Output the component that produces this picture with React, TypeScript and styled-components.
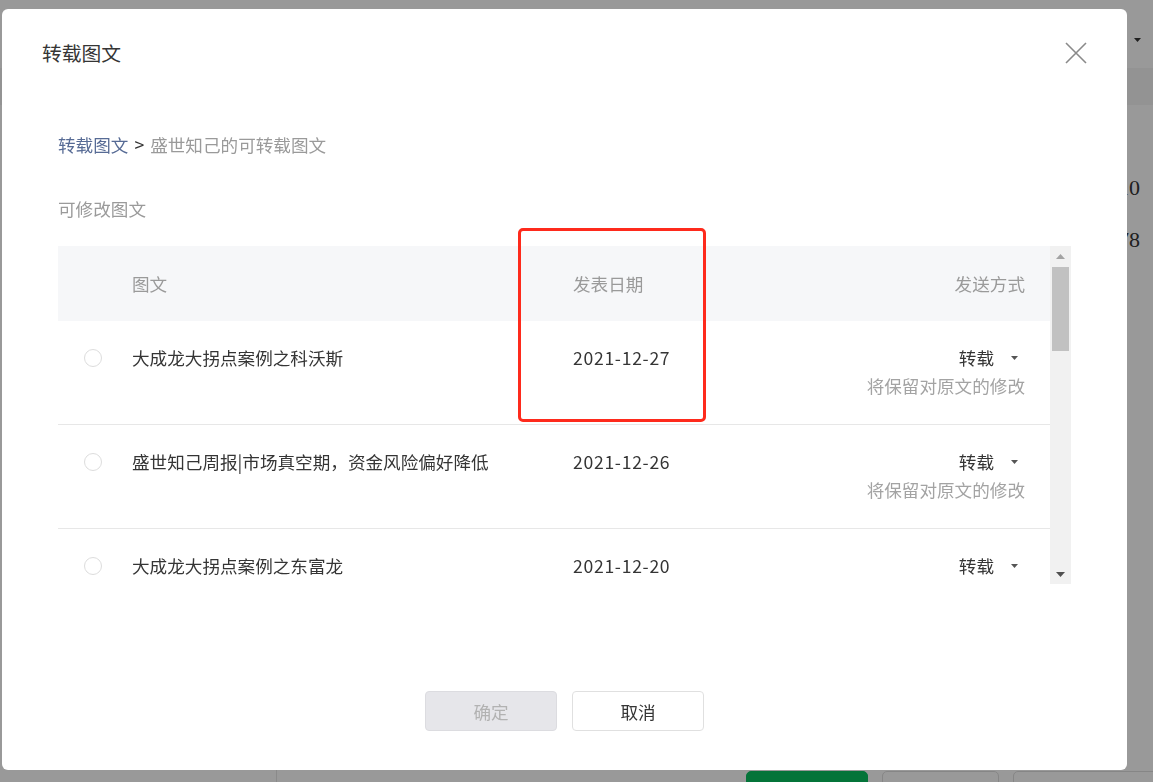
import React from "react";
import styled, { createGlobalStyle } from "styled-components";

const GlobalStyle = createGlobalStyle`
  html, body {
    margin: 0;
    padding: 0;
    height: 100%;
  }
  body {
    font-family: "Noto Sans CJK SC", "Noto Sans", sans-serif;
    color: #353535;
    overflow: hidden;
  }
  * {
    box-sizing: border-box;
  }
`;

/* ---------- page behind the dialog ---------- */

const Page = styled.div`
  display: flex;
  flex-direction: column;
  height: 100vh;
  background: #fff;
`;

const TopBar = styled.header`
  height: 68px;
  display: flex;
  align-items: center;
  justify-content: flex-end;
  gap: 8px;
  padding: 12px 12px 0 0;
  font-size: 17px;
  color: #353535;
`;

const NavBand = styled.div`
  height: 37px;
  background: #f5f5f5;
`;

const Workspace = styled.div`
  flex: 1;
  display: flex;
`;

const Sidebar = styled.aside`
  flex: none;
  width: 277px;
  border-right: 1px solid #e7e7e7;
`;

const Main = styled.main`
  flex: 1;
  min-width: 0;
  display: flex;
  flex-direction: column;
`;

const Stats = styled.div`
  flex: 1;
  display: flex;
  flex-direction: column;
  align-items: flex-end;
  gap: 24px;
  padding: 69px 13px 0 0;
  font-family: "Liberation Serif", serif;
  font-size: 22px;
  line-height: 28px;
  color: #353535;
`;

const PageFooter = styled.div`
  height: 11px;
  overflow: hidden;
  display: flex;
  gap: 14px;
  padding-left: 469px;
`;

const PageButton = styled.div<{ $primary?: boolean; $w: number }>`
  flex: none;
  width: ${(p) => p.$w}px;
  height: 40px;
  border-radius: 5px;
  background: ${(p) => (p.$primary ? "#07c160" : "#fff")};
  border: 1px solid ${(p) => (p.$primary ? "#07c160" : "#e0e0e0")};
`;

const Mask = styled.div`
  position: fixed;
  inset: 0;
  background: rgba(0, 0, 0, 0.4);
`;

/* ---------- dialog ---------- */

const Dialog = styled.div`
  position: fixed;
  left: 2px;
  top: 9px;
  width: 1125px;
  height: 761px;
  background: #fff;
  border-radius: 6px;
  display: flex;
  flex-direction: column;
`;

const DialogHeader = styled.div`
  display: flex;
  align-items: center;
  justify-content: space-between;
  padding: 30px 40px 0 40px;
`;

const Title = styled.h3`
  margin: 0;
  font-size: 19.8px;
  font-weight: 400;
  line-height: 28px;
  color: #353535;
`;

const CloseButton = styled.button`
  width: 22px;
  height: 22px;
  padding: 0;
  border: 0;
  background: none;
  display: flex;
  cursor: pointer;
`;

const DialogBody = styled.div`
  flex: 1;
  display: flex;
  flex-direction: column;
  padding: 0 56px 39px;
  font-size: 17.6px;
`;

const Breadcrumb = styled.div`
  margin-top: 66px;
  line-height: 24px;
  color: #9a9a9a;
`;

const CrumbLink = styled.a`
  color: #576b95;
  text-decoration: none;
`;

const CrumbSep = styled.span`
  color: #353535;
  margin: 0 6px;
`;

const SectionLabel = styled.div`
  margin-top: 40px;
  line-height: 24px;
  color: #9a9a9a;
`;

const Table = styled.div`
  margin-top: 25px;
  display: flex;
  height: 338px;
`;

const Scroller = styled.div`
  flex: 1;
  overflow: hidden;
`;

const Row = styled.div<{ $head?: boolean }>`
  display: grid;
  grid-template-columns: 74px 441px 1fr auto;
  padding-right: 25px;
  ${(p) =>
    p.$head
      ? `
    height: 75px;
    align-items: center;
    background: #f6f7f9;
    color: #9a9a9a;
  `
      : `
    height: 104px;
    align-items: start;
    padding-top: 23px;
    border-bottom: 1px solid #e7e7e7;
    color: #353535;
  `}
  line-height: 28px;
`;

const RadioCell = styled.div`
  height: 28px;
  display: flex;
  align-items: center;
  padding-left: 26px;
`;

const Radio = styled.span`
  width: 18px;
  height: 18px;
  border-radius: 50%;
  border: 1px solid #dcdcdc;
  background: #fff;
`;

const DateCell = styled.span`
  letter-spacing: 0.7px;
`;

const MethodCell = styled.div`
  display: flex;
  flex-direction: column;
  align-items: flex-end;
  text-align: right;
`;

const SendSelect = styled.div`
  display: inline-flex;
  align-items: center;
  gap: 17px;
  padding-right: 7px;
  cursor: pointer;
`;

const Note = styled.div`
  color: #a3a3a3;
`;

const ScrollTrack = styled.div`
  width: 21px;
  background: #f1f1f1;
  display: flex;
  flex-direction: column;
  align-items: center;
`;

const ScrollArrow = styled.div`
  height: 20px;
  display: flex;
  align-items: center;
  justify-content: center;
`;

const ScrollThumb = styled.div`
  width: 17px;
  height: 84px;
  margin-top: 1px;
  background: #c1c1c1;
`;

const ScrollGap = styled.div`
  flex: 1;
`;

const Actions = styled.div`
  margin-top: auto;
  display: flex;
  justify-content: center;
  gap: 15px;
`;

const ActionButton = styled.button<{ $disabled?: boolean }>`
  width: 132px;
  height: 40px;
  border-radius: 4px;
  font-family: inherit;
  font-size: 17.6px;
  border: 1px solid ${(p) => (p.$disabled ? "#dcdce0" : "#e0e0e0")};
  background: ${(p) => (p.$disabled ? "#e6e6ea" : "#fff")};
  color: ${(p) => (p.$disabled ? "#b2b2b2" : "#353535")};
  cursor: ${(p) => (p.$disabled ? "default" : "pointer")};
`;

const Highlight = styled.div`
  position: absolute;
  left: 516px;
  top: 219px;
  width: 188px;
  height: 194px;
  border: 3px solid #fe2a1c;
  border-radius: 5px;
  pointer-events: none;
`;

const Caret = ({ color = "#555" }: { color?: string }) => (
  <svg width="7" height="4" viewBox="0 0 7 4">
    <path d="M0 0h7L3.5 4z" fill={color} />
  </svg>
);

const articles = [
  { title: "大成龙大拐点案例之科沃斯", date: "2021-12-27" },
  { title: "盛世知己周报|市场真空期，资金风险偏好降低", date: "2021-12-26" },
  { title: "大成龙大拐点案例之东富龙", date: "2021-12-20" },
];

export default function App() {
  return (
    <>
      <GlobalStyle />
      <Page>
        <TopBar>
          <span>盛世知己</span>
          <Caret color="#353535" />
        </TopBar>
        <NavBand />
        <Workspace>
          <Sidebar />
          <Main>
            <Stats>
              <span>10</span>
              <span>78</span>
            </Stats>
            <PageFooter>
              <PageButton $primary $w={122} />
              <PageButton $w={117} />
              <PageButton $w={160} />
            </PageFooter>
          </Main>
        </Workspace>
      </Page>
      <Mask />
      <Dialog>
        <DialogHeader>
          <Title>转载图文</Title>
          <CloseButton aria-label="关闭">
            <svg width="22" height="22" viewBox="0 0 22 22">
              <path d="M1 1L21 21M21 1L1 21" stroke="#8a8a8a" strokeWidth="1.6" fill="none" />
            </svg>
          </CloseButton>
        </DialogHeader>
        <DialogBody>
          <Breadcrumb>
            <CrumbLink href="#">转载图文</CrumbLink>
            <CrumbSep>&gt;</CrumbSep>
            盛世知己的可转载图文
          </Breadcrumb>
          <SectionLabel>可修改图文</SectionLabel>
          <Table>
            <Scroller>
              <Row $head>
                <span />
                <span>图文</span>
                <span>发表日期</span>
                <MethodCell>发送方式</MethodCell>
              </Row>
              {articles.map((a) => (
                <Row key={a.date}>
                  <RadioCell>
                    <Radio />
                  </RadioCell>
                  <span>{a.title}</span>
                  <DateCell>{a.date}</DateCell>
                  <MethodCell>
                    <SendSelect>
                      转载
                      <Caret />
                    </SendSelect>
                    <Note>将保留对原文的修改</Note>
                  </MethodCell>
                </Row>
              ))}
            </Scroller>
            <ScrollTrack>
              <ScrollArrow>
                <svg width="9" height="5" viewBox="0 0 9 5">
                  <path d="M0 5h9L4.5 0z" fill="#a3a3a3" />
                </svg>
              </ScrollArrow>
              <ScrollThumb />
              <ScrollGap />
              <ScrollArrow>
                <svg width="9" height="5" viewBox="0 0 9 5">
                  <path d="M0 0h9L4.5 5z" fill="#505050" />
                </svg>
              </ScrollArrow>
            </ScrollTrack>
          </Table>
          <Actions>
            <ActionButton $disabled>确定</ActionButton>
            <ActionButton>取消</ActionButton>
          </Actions>
        </DialogBody>
        <Highlight />
      </Dialog>
    </>
  );
}
